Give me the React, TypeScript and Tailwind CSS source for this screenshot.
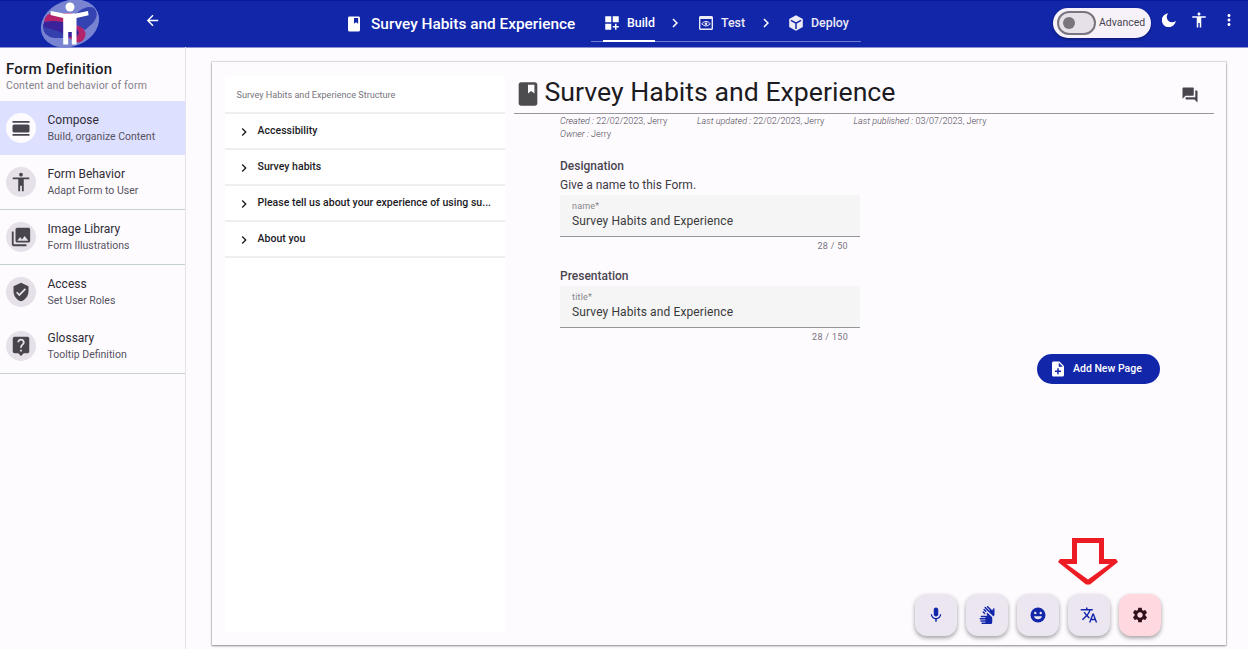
import React from "react";
import {
  MdAccessibility,
  MdArrowBack,
  MdChevronRight,
  MdDashboardCustomize,
  MdForum,
  MdLiveHelp,
  MdMic,
  MdMoreVert,
  MdNoteAdd,
  MdPhotoLibrary,
  MdSettings,
  MdSignLanguage,
  MdTranslate,
  MdVerifiedUser,
} from "react-icons/md";

function BookIcon({ className }: { className: string }) {
  return (
    <svg viewBox="0 0 24 24" fill="currentColor" className={className}>
      <path
        fillRule="evenodd"
        d="M6 2h12c1.100 0 2 .9 2 2v16c0 1.100-.9 2-2 2H6c-1.100 0-2-.9-2-2V4c0-1.100.9-2 2-2zM12 4v7.500l2.700-2 2.800 2V4z"
      />
    </svg>
  );
}

function ComposeIcon() {
  return (
    <svg viewBox="0 0 20 20" fill="currentColor" className="size-5">
      <path d="M1.500 3h17v1.700h-17zM1.500 16h17v1.700h-17z" />
      <rect x="1.500" y="6.400" width="17" height="8" rx="1.500" />
    </svg>
  );
}

function TestIcon() {
  return (
    <svg viewBox="0 0 14 14" className="size-3.5">
      <path
        fill="currentColor"
        fillRule="evenodd"
        d="M1.500 0h11C13.300 0 14 .7 14 1.500v11c0 .8-.7 1.500-1.500 1.500h-11C.7 14 0 13.300 0 12.500v-11C0 .7.7 0 1.500 0zM1.400 3v9.600h11.200V3z"
      />
      <path d="M2.700 7.800Q7 3 11.300 7.800Q7 12.200 2.700 7.800z" fill="none" stroke="currentColor" />
      <circle cx="7" cy="7.700" r="1.300" fill="currentColor" />
    </svg>
  );
}

function DeployIcon() {
  return (
    <svg viewBox="0 0 16 16" className="size-4">
      <path d="M8 .3 14.800 4v8L8 15.700 1.200 12V4z" fill="currentColor" />
      <path d="M3 5.300 8 8.200l5-2.900M8 8.200V14" fill="none" stroke="#1226aa" strokeWidth="1.500" />
    </svg>
  );
}

function SmileIcon() {
  return (
    <svg viewBox="0 0 16 16" className="size-4">
      <circle cx="8" cy="8" r="7.500" fill="currentColor" />
      <circle cx="5.300" cy="6" r="1.200" fill="#ece6f0" />
      <circle cx="10.700" cy="6" r="1.200" fill="#ece6f0" />
      <path d="M3.900 9.300h8.200a4.300 4.300 0 0 1-8.200 0z" fill="#ece6f0" />
    </svg>
  );
}

function Logo() {
  return (
    <svg viewBox="0 0 60 48" className="h-12 w-[60px]">
      <defs>
        <clipPath id="oval">
          <ellipse cx="30" cy="23.500" rx="30" ry="23" transform="rotate(-22 30 23.500)" />
        </clipPath>
      </defs>
      <g clipPath="url(#oval)">
        <path d="M0 0h60v48H0z" fill="#7884d2" />
        <path d="M38 12Q47 5 54 8q6 6-1 15l-8 7-14-8z" fill="#3442b2" />
        <path d="M3 24q5-4 16-1l14 8v7H14Q3 36 3 27z" fill="#3440ae" />
        <path d="M4 22Q5 13 14 13h18v12l-12-3q-9-1-16 0z" fill="#b4246b" />
        <path d="M32 24l9 3q6 4 4 10-3 7-9 5l-7-4z" fill="#b4246b" />
        <path d="M4 22q9-2 18 0l13 3 4 8-4 6-15-7q-8-3-16-5z" fill="#3a239a" />
      </g>
      <circle cx="30" cy="7" r="4.500" fill="#fff" />
      <path
        d="M10.800 11 24 13.500h12L48 11l.6 4.200L36.500 18v26.500h-4.700V32h-3.600v12.500h-5V18L10.500 15z"
        fill="#fff"
      />
    </svg>
  );
}

function TopBar() {
  return (
    <header className="flex h-[47px] shrink-0 items-start border-t border-[#0a18a0] bg-[#1226aa] text-white shadow-[0_1px_0_#8b91d4]">
      <div className="-mt-px ml-10 w-[60px]">
        <Logo />
      </div>
      <MdArrowBack className="mt-[11px] ml-[44px] size-[17px]" />
      <div className="mt-[13px] ml-[184px] flex h-5 w-[246px] items-center">
        <BookIcon className="size-[18px]" />
        <h1 className="ml-[8px] text-[15.400px] leading-5 font-medium whitespace-nowrap">
          Survey Habits and Experience
        </h1>
      </div>
      <nav className="flex h-[41px] w-[270px] border-b border-[#6f7bcb] pl-3 text-[12.400px] font-medium whitespace-nowrap">
        <div className="-mb-px flex w-[52px] items-center gap-[7px] border-b-2 border-white pt-[5px]">
          <MdDashboardCustomize className="size-[18px] shrink-0" />
          <span className="-ml-px">Build</span>
        </div>
        <div className="flex items-center pt-1 text-[#eceaf5]">
          <MdChevronRight className="ml-[11px] size-[18px] text-white" />
          <span className="ml-[15px]"><TestIcon /></span>
          <span className="ml-2 w-[25px]">Test</span>
          <MdChevronRight className="ml-[11px] size-[18px] text-white" />
          <span className="ml-[13px]"><DeployIcon /></span>
          <span className="ml-[7px]">Deploy</span>
        </div>
      </nav>
      <div className="mt-[7px] ml-48 flex h-[30px] w-[98px] items-center rounded-full bg-[#f7f2fa] pl-1 shadow-[0_1px_3px_#00000060]">
        <span className="flex h-6 w-[39px] shrink-0 items-center rounded-full border-2 border-[#79747e] bg-[#e6e0e9] pl-1">
          <span className="size-3 rounded-full bg-[#79747e]" />
        </span>
        <span className="ml-[3px] text-[10.500px] text-[#49454f]">Advanced</span>
      </div>
      <svg viewBox="0 0 14 14" className="mt-[12px] ml-[11px] size-3.5" fill="currentColor">
        <path d="M6.300.2A5.300 5.300 0 0 0 13.800 7.700 7 7 0 1 1 6.300.2z" />
      </svg>
      <MdAccessibility className="mt-[10px] ml-[14px] size-[18px]" />
      <MdMoreVert className="mt-[10px] ml-[12px] size-[18px]" />
    </header>
  );
}

type NavItem = { title: string; note: string; icon: React.ReactNode; row: string; disc: string };

const navItems: NavItem[] = [
  {
    title: "Compose",
    note: "Build, organize Content",
    icon: <ComposeIcon />,
    row: "h-[54px] bg-[#dee0ff]",
    disc: "bg-[#fefbff]",
  },
  {
    title: "Form Behavior",
    note: "Adapt Form to User",
    icon: <MdAccessibility className="size-[22px]" />,
    row: "h-[55px] border-b border-[#c9d0d3]",
    disc: "bg-[#e6e0e9]",
  },
  {
    title: "Image Library",
    note: "Form Illustrations",
    icon: <MdPhotoLibrary className="size-[22px]" />,
    row: "h-[55px] border-b border-[#c9d0d3]",
    disc: "bg-[#e6e0e9]",
  },
  {
    title: "Access",
    note: "Set User Roles",
    icon: <MdVerifiedUser className="size-5" />,
    row: "h-[54px]",
    disc: "bg-[#e6e0e9]",
  },
  {
    title: "Glossary",
    note: "Tooltip Definition",
    icon: <MdLiveHelp className="size-[22px]" />,
    row: "h-[55px] border-b border-[#c9d0d3]",
    disc: "bg-[#e6e0e9]",
  },
];

function Sidebar() {
  return (
    <aside className="w-[186px] shrink-0 border-r border-[#e6e3ea]">
      <div className="h-[54px] pt-3 pl-1.5">
        <h2 className="text-[15px] leading-5 font-medium tracking-[0.190px] text-[#1c1b1f]">Form Definition</h2>
        <p className="text-[10.500px] leading-[14px] tracking-[0.150px] text-[#84818a]">
          Content and behavior of form
        </p>
      </div>
      {navItems.map((item) => (
        <div key={item.title} className={`flex items-start pl-1.5 ${item.row}`}>
          <span
            className={`mt-3 flex size-[30px] shrink-0 items-center justify-center rounded-full text-[#49454f] ${item.disc}`}
          >
            {item.icon}
          </span>
          <div className="ml-[11.500px] pt-[11px]">
            <p className="text-[12px] leading-4 text-[#2f2c36]">{item.title}</p>
            <p className="pt-px text-[10.500px] leading-4 text-[#565360]">{item.note}</p>
          </div>
        </div>
      ))}
    </aside>
  );
}

const pages = [
  "Accessibility",
  "Survey habits",
  "Please tell us about your experience of using su...",
  "About you",
];

function Structure() {
  return (
    <section className="mt-[14px] ml-[13px] h-[556px] w-[280px] shrink-0 bg-white">
      <div className="flex h-[38px] items-center border-b-2 border-[#eeeeee] pt-1 pl-[11.500px] text-[9.100px] font-normal text-[#77747c]">
        Survey Habits and Experience Structure
      </div>
      {pages.map((page) => (
        <div key={page} className="flex h-9 items-center border-b-2 border-[#eeeeee] text-[10.500px] font-medium text-[#1c1b1f]">
          <MdChevronRight className="mt-0.5 ml-[11px] size-4 shrink-0 stroke-black" />
          <span className="ml-[5.500px] tracking-[0.020px] whitespace-nowrap">{page}</span>
        </div>
      ))}
    </section>
  );
}

type FieldProps = { label: string; value: string; count: string };

function Field({ label, value, count }: FieldProps) {
  return (
    <>
      <div className="h-[42px] w-[300px] rounded-t-[3px] border-b border-[#939698] bg-[#f5f5f5] pt-[5px] pl-3">
        <p className="text-[9px] leading-3 tracking-[0.200px] text-[#88868c]">{label}</p>
        <p className="pt-px text-[12px] leading-4 tracking-[0.120px] text-[#3a3a3c]">{value}</p>
      </div>
      <p className="w-[288px] pt-[3px] text-right text-[9px] leading-3 tracking-[0.310px] text-[#77747c]">{count}</p>
    </>
  );
}

function MetaEntry({ name, value, className }: { name: string; value: string; className?: string }) {
  return (
    <span className={className}>
      <i>{name} :</i> {value}
    </span>
  );
}

function Editor() {
  return (
    <section className="ml-[9px] w-[700px] shrink-0">
      <div className="flex h-[52px] items-start border-b border-[#98959e]">
        <BookIcon className="mt-[18px] size-7 text-[#4d4d4f]" />
        <h2 className="mt-3 ml-[2.500px] text-[26.700px] leading-9 whitespace-nowrap text-[#1c1b1f]">
          Survey Habits and Experience
        </h2>
        <MdForum className="mt-[24px] mr-[15px] ml-auto size-[18px] text-[#49454f]" />
      </div>
      <div className="pl-[46px]">
        <div className="h-[44px] pt-px text-[9px] leading-[13px] font-light text-[#49454f]">
          <div className="flex whitespace-nowrap">
            <MetaEntry name="Created" value="22/02/2023, Jerry" className="w-[137px]" />
            <MetaEntry name="Last updated" value="22/02/2023, Jerry" className="w-[156.500px]" />
            <MetaEntry name="Last published" value="03/07/2023, Jerry" />
          </div>
          <MetaEntry name="Owner" value="Jerry" />
        </div>
        <h3 className="text-[12px] leading-4 font-medium text-[#49454f]">Designation</h3>
        <p className="h-[21px] pt-[3px] text-[12px] leading-4 text-[#3d3a42]">Give a name to this Form.</p>
        <Field label="name*" value="Survey Habits and Experience" count="28 / 50" />
        <h3 className="mt-[16px] mb-[2px] text-[12px] leading-4 font-medium text-[#49454f]">Presentation</h3>
        <Field label="title*" value="Survey Habits and Experience" count="28 / 150" />
      </div>
      <button className="mt-[11px] ml-[523px] flex h-[30px] w-[123px] items-center rounded-full bg-[#1226aa] pl-3 text-[10.500px] font-medium text-white">
        <MdNoteAdd className="size-[18px]" />
        <span className="ml-1.5">Add New Page</span>
      </button>
    </section>
  );
}

const tools = [
  { name: "Dictate", icon: <MdMic className="size-[18px]" />, tone: "bg-[#ece6f0] text-[#1226aa]" },
  { name: "Sign language", icon: <MdSignLanguage className="size-[18px]" />, tone: "bg-[#ece6f0] text-[#1226aa]" },
  { name: "Emoji", icon: <SmileIcon />, tone: "bg-[#ece6f0] text-[#1226aa]" },
  { name: "Translate", icon: <MdTranslate className="size-[18px]" />, tone: "bg-[#ece6f0] text-[#1226aa]" },
  { name: "Settings", icon: <MdSettings className="size-[18px]" />, tone: "bg-[#ffd8e0] text-[#31111d]" },
];

function FloatingTools() {
  return (
    <div className="absolute right-[65px] bottom-[9px] flex gap-[9px]">
      {tools.map((tool) => (
        <button
          key={tool.name}
          className={`flex size-[42px] items-center justify-center rounded-xl shadow-[0_2px_4px_#00000060] ${tool.tone}`}
        >
          {tool.icon}
        </button>
      ))}
      <svg viewBox="0 0 60 47" className="absolute -top-[56px] left-[143px] h-[47px] w-[60px]">
        <path
          fillRule="evenodd"
          d="M14 0h32v21h12l2 3-28 22.500h-4L0 24l2-3h12zM19 5v21H8.500L30 41.500 51.500 26H41V5z"
          fill="#ed1c24"
        />
      </svg>
    </div>
  );
}

export default function App() {
  return (
    <div className="flex h-[649px] w-[1248px] flex-col overflow-hidden bg-[#fefbff] font-['Roboto',sans-serif]">
      <TopBar />
      <div className="flex min-h-0 flex-1">
        <Sidebar />
        <main className="relative mt-[15px] ml-[26px] flex h-[583px] w-[1014px] shrink-0 bg-[#fefbff] shadow-[0_1px_2px_#00000060,0_0_1px_1px_#0000001a]">
          <Structure />
          <Editor />
          <FloatingTools />
        </main>
      </div>
    </div>
  );
}
